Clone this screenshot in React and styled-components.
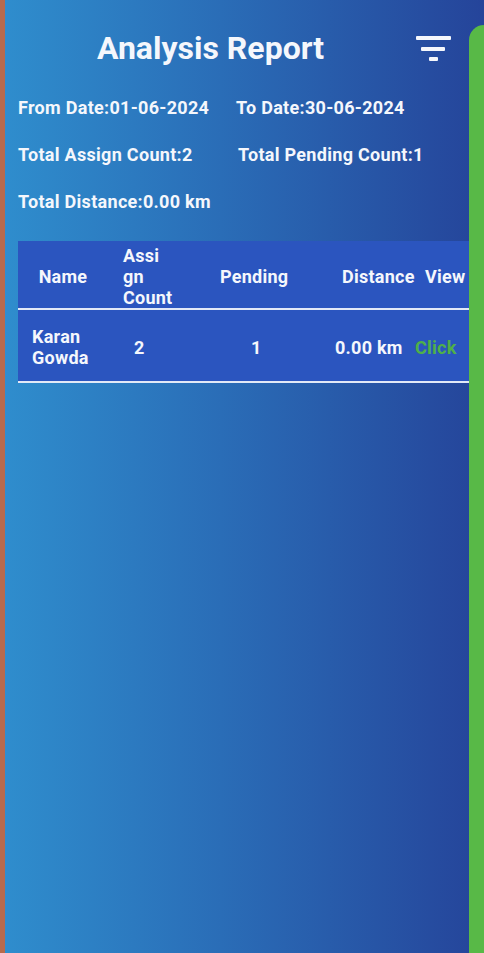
import React from 'react'
import styled, { createGlobalStyle } from 'styled-components'

const GlobalStyle = createGlobalStyle`
    html, body {
        margin: 0;
        padding: 0;
        height: 100%;
        overflow: hidden;
    }
    body {
        font-family: Roboto, "Noto Sans", sans-serif;
    }
`

const Page = styled.div`
    position: relative;
    width: 100%;
    height: 100vh;
    box-sizing: border-box;
    border-left: 5px solid #b76a4b;
    background: linear-gradient(90deg, #2f8dcd 0%, #2a6db7 45%, #25449a 100%);
    color: #f5f7fc;
    overflow: hidden;
`

const Header = styled.div`
    display: flex;
    align-items: center;
    padding: 28px 33px 0 0;
`

const Title = styled.h1`
    flex: 1;
    margin: 0;
    text-align: center;
    font-size: 32px;
    line-height: 40px;
    font-weight: 700;
`

const Summary = styled.div`
    display: flex;
    flex-direction: column;
    gap: 25px;
    padding: 29px 0 0 13px;
`

const SummaryRow = styled.div`
    display: grid;
    grid-template-columns: ${p => p.$split}px auto;
    font-size: 18px;
    line-height: 22px;
    letter-spacing: 0.3px;
    font-weight: 700;
    white-space: nowrap;
`

const Table = styled.div`
    margin: 28px 0 0 13px;
    width: 490px;
    background: #2b55bf;
`

const Row = styled.div`
    display: grid;
    grid-template-columns: 90px 100px 115px 90px 85px;
    align-items: center;
    padding: ${p => p.$pad};
    border-bottom: 2px solid #e2e9f7;
    font-size: 18px;
    line-height: 21px;
    letter-spacing: 0.25px;
    font-weight: 700;
`

const Cell = styled.div`
    padding-left: ${p => p.$left || 0}px;
    text-align: ${p => (p.$center ? 'center' : 'left')};
    color: ${p => (p.$link ? '#4fb048' : 'inherit')};
    white-space: nowrap;
`

const Drawer = styled.div`
    position: absolute;
    top: 25px;
    left: 464px;
    right: 0;
    bottom: 0;
    background: #58b947;
    border-top-left-radius: 16px;
`

const FilterIcon = () => (
    <svg width="35" height="25" viewBox="0 0 35 25">
        <rect x="0" y="0" width="35" height="4" rx="1" fill="#f5f7fc" />
        <rect x="5" y="11" width="24" height="4" rx="1" fill="#f5f7fc" />
        <rect x="13" y="21" width="9" height="4" rx="1" fill="#f5f7fc" />
    </svg>
)

const App = () => {
    return (
        <React.Fragment>
            <GlobalStyle />
            <Page>
                <Header>
                    <Title>Analysis Report</Title>
                    <FilterIcon />
                </Header>
                <Summary>
                    <SummaryRow $split={218}>
                        <span>From Date:01-06-2024</span>
                        <span>To Date:30-06-2024</span>
                    </SummaryRow>
                    <SummaryRow $split={220}>
                        <span>Total Assign Count:2</span>
                        <span>Total Pending Count:1</span>
                    </SummaryRow>
                    <SummaryRow $split={220}>
                        <span>Total Distance:0.00 km</span>
                    </SummaryRow>
                </Summary>
                <Table>
                    <Row $pad="4px 0 0">
                        <Cell $center>Name</Cell>
                        <Cell $left={15}>Assi<br />gn<br />Count</Cell>
                        <Cell $left={12}>Pending</Cell>
                        <Cell $left={19}>Distance</Cell>
                        <Cell $left={12}>View</Cell>
                    </Row>
                    <Row $pad="16px 0 13px">
                        <Cell $left={14}>Karan<br />Gowda</Cell>
                        <Cell $left={26}>2</Cell>
                        <Cell $left={43}>1</Cell>
                        <Cell $left={12}>0.00 km</Cell>
                        <Cell $left={2} $link>Click</Cell>
                    </Row>
                </Table>
                <Drawer />
            </Page>
        </React.Fragment>
    )
}

export default App
